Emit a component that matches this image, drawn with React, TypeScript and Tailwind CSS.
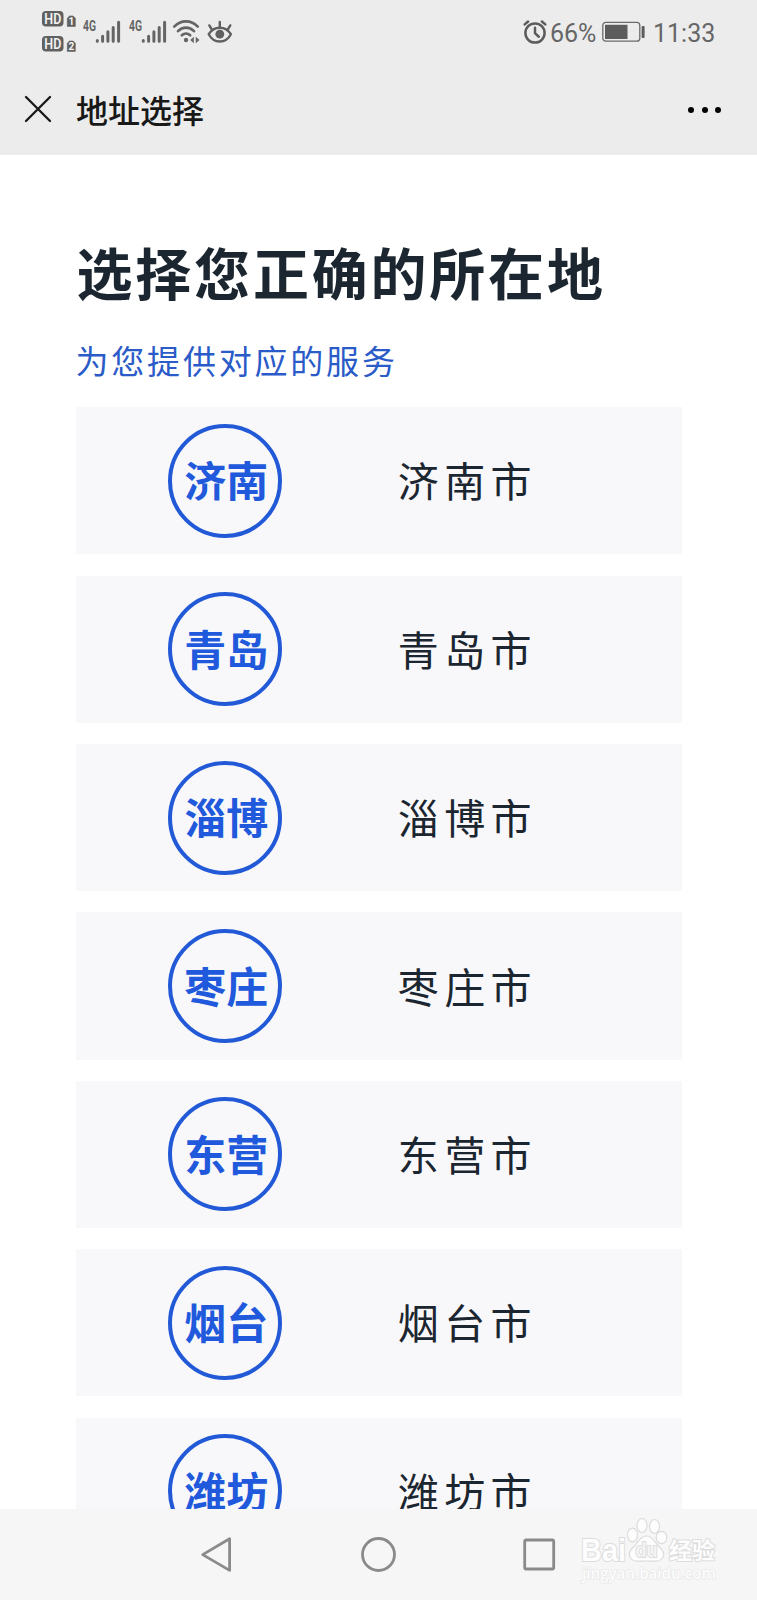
import React from 'react';

const CITIES = ['济南', '青岛', '淄博', '枣庄', '东营', '烟台', '潍坊'];

function HdBadge({ slot }: { slot: number }) {
  return (
    <svg width="34" height="16" viewBox="0 0 34 16">
      <rect x="0" y="0" width="21.5" height="15.5" rx="4" fill="#606060" />
      <text x="10.8" y="12.9" textAnchor="middle" fontSize="14" fontWeight="600" textLength="17" lengthAdjust="spacingAndGlyphs" fill="#f2f2f2">
        HD
      </text>
      <path d="M27.5 5h3.7l2.1 2.2v8.2h-8V7.2z" fill="#606060" stroke="#606060" strokeWidth="0.6" strokeLinejoin="round" />
      <text x="29.3" y="13.9" textAnchor="middle" fontSize="10" fontWeight="700" fill="#f5f5f5">
        {slot}
      </text>
    </svg>
  );
}

function Signal() {
  return (
    <svg width="38" height="26" viewBox="0 0 38 26" stroke="#656565" strokeWidth="3" strokeLinecap="round">
      <text x="0" y="11.5" fontSize="14.5" fontWeight="700" textLength="13" lengthAdjust="spacingAndGlyphs" fill="#656565" stroke="none">
        4G
      </text>
      <path d="M14.3 22.3v-.8M19.6 22.3v-5M24.9 22.3v-9.5M30.2 22.3V8.5M35.6 22.3V3.2" />
    </svg>
  );
}

function Wifi() {
  return (
    <svg width="28" height="26" viewBox="0 0 28 26" fill="none" stroke="#656565" strokeWidth="2.6" strokeLinecap="round">
      <path d="M2.2 7.6C8.8.6 19.2.6 25.8 7.6M6 12.2c4.6-4.8 11.4-4.8 16 0M9.8 16.3c2.5-2.3 5.9-2.3 8.4 0" />
      <circle cx="14" cy="21" r="2.2" fill="#656565" stroke="none" />
      <path d="M21.8 17.8v6.4l-3.6-3.2zM23.7 17.8v6.4l3.8-3.2z" fill="#656565" stroke="none" />
    </svg>
  );
}

function Eye() {
  return (
    <svg width="26" height="26" viewBox="0 0 26 26" fill="none" stroke="#606060" strokeWidth="2.4" strokeLinecap="round">
      <path d="M1.7 15.2C7 6.6 18.6 6.6 23.9 15.2 18.6 25 7 25 1.7 15.2z" strokeLinejoin="round" />
      <path d="M12.8 8V3M4.6 10.2 2.3 6.4M21 10.2 23.3 6.4" />
      <circle cx="12.8" cy="15.2" r="4.4" fill="#606060" stroke="none" />
    </svg>
  );
}

function AlarmClock() {
  return (
    <svg width="25" height="26" viewBox="0 0 25 26" fill="none" stroke="#5c5c5c" strokeWidth="2.5" strokeLinecap="round">
      <circle cx="12" cy="14" r="9.6" />
      <path d="M12 8.7v5.6l3.8 3.4M1.7 5.4l3.4-2.9M22.3 5.4l-3.4-2.9" />
    </svg>
  );
}

function Battery() {
  return (
    <svg width="44" height="22" viewBox="0 0 44 22">
      <rect x="0.8" y="1.4" width="37" height="18.8" rx="3" fill="none" stroke="#6a6a6a" strokeWidth="1.3" />
      <rect x="3" y="3.8" width="22.5" height="14.2" fill="#5c5c5c" />
      <rect x="39.6" y="5" width="3" height="12" rx="1" fill="#5c5c5c" />
    </svg>
  );
}

function StatusBar() {
  return (
    <div className="flex h-[63px] items-center justify-between pl-[42px] pr-[42px] font-['Roboto',sans-serif]">
      <div className="flex items-center">
        <div className="flex flex-col gap-[9px]">
          <HdBadge slot={1} />
          <HdBadge slot={2} />
        </div>
        <div className="ml-[7px] flex gap-[8px]">
          <Signal />
          <Signal />
        </div>
        <div className="ml-[5px] flex gap-[7px]">
          <Wifi />
          <Eye />
        </div>
      </div>
      <div className="flex items-center text-[25px] leading-none text-[#666666]">
        <AlarmClock />
        <span className="ml-[2px] mt-[3px] w-[47px]">66%</span>
        <span className="ml-[5px]">
          <Battery />
        </span>
        <span className="ml-[7px] mt-[3px] w-[62px]">11:33</span>
      </div>
    </div>
  );
}

function TitleBar() {
  return (
    <div className="flex h-[92px] items-center pl-[24px] pr-[36px]">
      <svg width="28" height="28" viewBox="0 0 28 28" stroke="#181818" strokeWidth="2.3" strokeLinecap="round">
        <path d="M2 2l24 24M26 2 2 26" />
      </svg>
      <h1 className="-mt-px ml-[24px] text-[32px] font-medium leading-none text-[#181818]">地址选择</h1>
      <div className="ml-auto mt-[2px] flex gap-[7.4px]">
        <span className="size-[6px] rounded-full bg-black" />
        <span className="size-[6px] rounded-full bg-black" />
        <span className="size-[6px] rounded-full bg-black" />
      </div>
    </div>
  );
}

function CityRow({ name }: { name: string }) {
  return (
    <li className="flex h-[147.3px] shrink-0 items-center bg-[#f8f8fa] pl-[92.3px]">
      <div className="flex size-[114px] items-center justify-center rounded-full border-4 border-[#2159d6] pb-[3px] pl-[3px] text-[42px] font-bold leading-none text-[#2159dc]">
        <span className="whitespace-nowrap">{name}</span>
      </div>
      <span className="-mt-[2px] ml-[116px] text-[41px] leading-none tracking-[5.4px] text-[#1b2630]">{name}市</span>
    </li>
  );
}

// Semi-hidden brand mark over the right end of the navigation bar
function Watermark() {
  return (
    <svg className="absolute right-[40px] top-[8px]" width="146" height="68" viewBox="0 0 146 68" fill="#fdfdfd" stroke="#dcdcdc" strokeWidth="1.2">
      <ellipse cx="61.5" cy="18" rx="5" ry="6.8" />
      <ellipse cx="71" cy="8.5" rx="5" ry="7" />
      <ellipse cx="83.5" cy="9.5" rx="5" ry="7" />
      <ellipse cx="90.5" cy="20.5" rx="5.3" ry="6.2" />
      <path d="M75.5 19c-6 0-8 6-12 10s-7 7-4 12c3 4.5 9 3 16 3s13 1.5 16-3c3-5 0-8-4-12s-6-10-12-10z" />
      <g className="font-['Liberation_Sans',sans-serif]" fontWeight="700" paintOrder="stroke" strokeWidth="2">
        <text x="10" y="43.5" fontSize="31" textLength="45" lengthAdjust="spacingAndGlyphs">Bai</text>
        <text x="64.5" y="40" fontSize="20" textLength="22" lengthAdjust="spacingAndGlyphs" fill="#f3f3f3">du</text>
      </g>
      <text className="font-['Noto_Sans_CJK_SC',sans-serif]" x="98" y="42" fontSize="23" fontWeight="700" paintOrder="stroke" strokeWidth="2">经验</text>
      <text className="font-['Open_Sans',sans-serif]" x="11" y="61.5" fontSize="16" fontWeight="600" textLength="134" lengthAdjust="spacingAndGlyphs" paintOrder="stroke" stroke="#e4e4e4">
        jingyan.baidu.com
      </text>
    </svg>
  );
}

function NavBar() {
  return (
    <nav className="relative flex h-[91px] shrink-0 items-start bg-[#f6f6f6] pl-[200px] pt-[27px]">
      <svg width="34" height="38" viewBox="0 0 34 38" fill="none" stroke="#8a8a8a" strokeWidth="2.8" strokeLinejoin="round">
        <path d="M29.6 2.8v31.6L2.7 18.6z" />
      </svg>
      <svg className="ml-[126px]" width="38" height="38" viewBox="0 0 38 38" fill="none" stroke="#8a8a8a" strokeWidth="2.8">
        <circle cx="18.5" cy="18.5" r="16" />
      </svg>
      <svg className="ml-[124px]" width="36" height="38" viewBox="0 0 36 38" fill="none" stroke="#8a8a8a" strokeWidth="2.8">
        <rect x="2.7" y="4" width="29" height="29" rx="1.5" />
      </svg>
      <Watermark />
    </nav>
  );
}

export default function App() {
  return (
    <div className="flex h-[1600px] w-[757px] flex-col overflow-hidden bg-white font-['Noto_Sans_CJK_SC',sans-serif]">
      <header className="h-[155px] shrink-0 bg-[#ececec]">
        <StatusBar />
        <TitleBar />
      </header>

      <main className="min-h-0 flex-1 overflow-hidden px-[75.5px] pt-[88px]">
        <h2 className="ml-px whitespace-nowrap text-[56px] font-bold leading-[56px] tracking-[2.8px] text-[#1b2630]">选择您正确的所在地</h2>
        <p className="mt-[45px] text-[33px] leading-[33px] tracking-[2.8px] text-[#2a5bc8]">为您提供对应的服务</p>
        <ul className="mt-[30.2px] flex flex-col gap-[21.1px]">
          {CITIES.map((city) => (
            <CityRow key={city} name={city} />
          ))}
        </ul>
      </main>

      <NavBar />
    </div>
  );
}
